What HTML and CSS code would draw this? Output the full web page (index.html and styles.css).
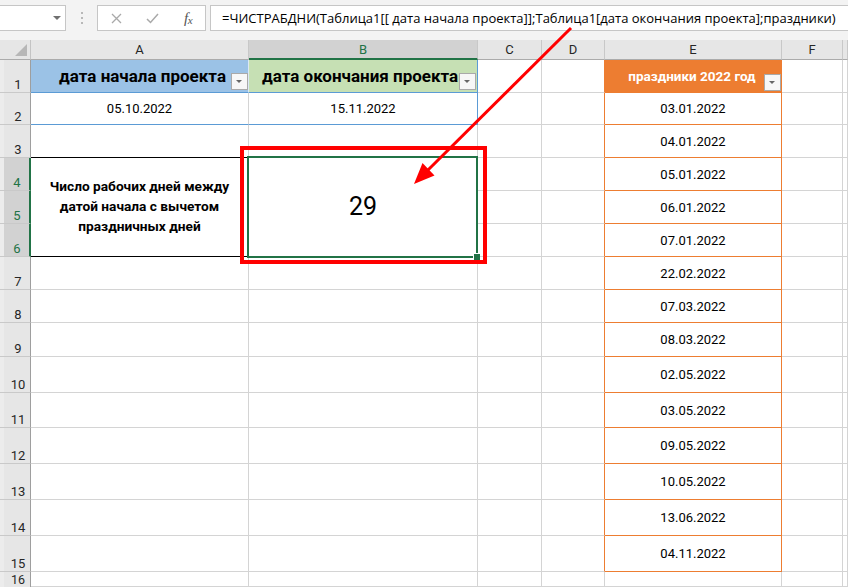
FILE: index.html
```html
<!DOCTYPE html>
<html lang="ru">
<head>
<meta charset="utf-8">
<title>Excel</title>
<link rel="stylesheet" href="styles.css">
</head>
<body>
<div class="app">
  <div class="fbar">
    <div class="namebox"><span class="nb-arrow"></span></div>
    <div class="grip">
      <svg width="3" height="12" viewBox="0 0 3 12"><rect x="0" y="0" width="2" height="2" fill="#b8b8b8"/><rect x="0" y="5" width="2" height="2" fill="#b8b8b8"/><rect x="0" y="10" width="2" height="2" fill="#b8b8b8"/></svg>
    </div>
    <div class="fbtns">
      <span class="slot s1"><svg width="11" height="11" viewBox="0 0 11 11"><path d="M1 1 L10 10 M10 1 L1 10" stroke="#a9a9a9" stroke-width="1.3" fill="none"/></svg></span>
      <span class="slot s2"><svg width="13" height="11" viewBox="0 0 13 11"><path d="M1 6 L4.5 9.5 L12 1" stroke="#a9a9a9" stroke-width="1.5" fill="none"/></svg></span>
      <span class="slot s3"><span class="fx">f<span class="fxx">x</span></span></span>
    </div>
    <div class="finput">=ЧИСТРАБДНИ(Таблица1[[ дата начала проекта]];Таблица1[дата окончания проекта];праздники)</div>
  </div>

  <div class="sheet">
    <!-- header row -->
    <div class="corner"><svg width="31" height="20" viewBox="0 0 31 20"><polygon points="27,4 27,16 15,16" fill="#b7b7b7"/></svg></div>
    <div class="ch">A</div>
    <div class="ch ch-sel">B</div>
    <div class="ch">C</div>
    <div class="ch">D</div>
    <div class="ch">E</div>
    <div class="ch">F</div>
    <div class="ch"></div>

    <!-- row 1 -->
    <div class="rh">1</div>
    <div class="c th-a">дата начала проекта<span class="dd"></span></div>
    <div class="c th-b"><span class="clip">дата окончания проекта</span><span class="dd dd-b"></span></div>
    <div class="c"></div>
    <div class="c d-edge"></div>
    <div class="c th-e">праздники 2022 год<span class="dd dd-e"></span></div>
    <div class="c"></div>
    <div class="c"></div>

    <!-- row 2 -->
    <div class="rh">2</div>
    <div class="c td-a">05.10.2022</div>
    <div class="c td-b">15.11.2022</div>
    <div class="c"></div>
    <div class="c d-edge"></div>
    <div class="c e-cell">03.01.2022</div>
    <div class="c"></div>
    <div class="c"></div>

    <!-- row 3 -->
    <div class="rh">3</div>
    <div class="c a3"></div>
    <div class="c"></div>
    <div class="c"></div>
    <div class="c d-edge"></div>
    <div class="c e-cell">04.01.2022</div>
    <div class="c"></div>
    <div class="c"></div>

    <!-- row 4 -->
    <div class="rh rh-sel">4</div>
    <div class="c merged label">Число рабочих дней между<br>датой начала с вычетом<br>праздничных дней</div>
    <div class="c merged result">29<span class="selbox"><span class="handle"></span></span></div>
    <div class="c"></div>
    <div class="c d-edge"></div>
    <div class="c e-cell">05.01.2022</div>
    <div class="c"></div>
    <div class="c"></div>

    <!-- row 5 -->
    <div class="rh rh-sel">5</div>
    <div class="c"></div>
    <div class="c d-edge"></div>
    <div class="c e-cell">06.01.2022</div>
    <div class="c"></div>
    <div class="c"></div>

    <!-- row 6 -->
    <div class="rh rh-sel">6</div>
    <div class="c"></div>
    <div class="c d-edge"></div>
    <div class="c e-cell">07.01.2022</div>
    <div class="c"></div>
    <div class="c"></div>

    <!-- row 7 -->
    <div class="rh">7</div>
    <div class="c"></div><div class="c"></div><div class="c"></div>
    <div class="c d-edge"></div>
    <div class="c e-cell">22.02.2022</div>
    <div class="c"></div><div class="c"></div>

    <!-- row 8 -->
    <div class="rh">8</div>
    <div class="c"></div><div class="c"></div><div class="c"></div>
    <div class="c d-edge"></div>
    <div class="c e-cell">07.03.2022</div>
    <div class="c"></div><div class="c"></div>

    <!-- row 9 -->
    <div class="rh">9</div>
    <div class="c"></div><div class="c"></div><div class="c"></div>
    <div class="c d-edge"></div>
    <div class="c e-cell">08.03.2022</div>
    <div class="c"></div><div class="c"></div>

    <!-- row 10 -->
    <div class="rh">10</div>
    <div class="c"></div><div class="c"></div><div class="c"></div>
    <div class="c d-edge"></div>
    <div class="c e-cell">02.05.2022</div>
    <div class="c"></div><div class="c"></div>

    <!-- row 11 -->
    <div class="rh">11</div>
    <div class="c"></div><div class="c"></div><div class="c"></div>
    <div class="c d-edge"></div>
    <div class="c e-cell">03.05.2022</div>
    <div class="c"></div><div class="c"></div>

    <!-- row 12 -->
    <div class="rh">12</div>
    <div class="c"></div><div class="c"></div><div class="c"></div>
    <div class="c d-edge"></div>
    <div class="c e-cell">09.05.2022</div>
    <div class="c"></div><div class="c"></div>

    <!-- row 13 -->
    <div class="rh">13</div>
    <div class="c"></div><div class="c"></div><div class="c"></div>
    <div class="c d-edge"></div>
    <div class="c e-cell">10.05.2022</div>
    <div class="c"></div><div class="c"></div>

    <!-- row 14 -->
    <div class="rh">14</div>
    <div class="c"></div><div class="c"></div><div class="c"></div>
    <div class="c d-edge"></div>
    <div class="c e-cell">13.06.2022</div>
    <div class="c"></div><div class="c"></div>

    <!-- row 15 -->
    <div class="rh">15</div>
    <div class="c"></div><div class="c"></div><div class="c"></div>
    <div class="c d-edge"></div>
    <div class="c e-cell">04.11.2022</div>
    <div class="c"></div><div class="c"></div>

    <!-- row 16 -->
    <div class="rh rh-last">16</div>
    <div class="c"></div><div class="c"></div><div class="c"></div>
    <div class="c"></div><div class="c"></div>
    <div class="c"></div><div class="c"></div>
  </div>

  <div class="redbox"></div>
  <svg class="arrow" width="848" height="587" viewBox="0 0 848 587">
    <line x1="571" y1="28" x2="427" y2="171" stroke="#ff0000" stroke-width="3"/>
    <polygon points="414,184 422.5,163 434.5,175.5" fill="#ff0000"/>
  </svg>
</div>
</body>
</html>
```

FILE: styles.css
```css
* { box-sizing: border-box; }

html, body {
  margin: 0;
  padding: 0;
}

body {
  width: 848px;
  height: 587px;
  overflow: hidden;
  background: #ffffff;
  font-family: Roboto, "Liberation Sans", sans-serif;
  color: #000;
}

.app {
  position: relative;
  width: 848px;
  height: 587px;
  overflow: hidden;
}

/* ---------- formula bar ---------- */
.fbar {
  height: 40px;
  background: #f3f3f3;
  display: flex;
  align-items: flex-start;
  padding-top: 5px;
}

.namebox {
  position: relative;
  width: 67px;
  height: 26px;
  margin-left: -1px;
  background: #fff;
  border: 1px solid #c6c6c6;
}

.nb-arrow {
  position: absolute;
  left: 53px;
  top: 10px;
  width: 0;
  height: 0;
  border-left: 4px solid transparent;
  border-right: 4px solid transparent;
  border-top: 4px solid #707070;
}

.grip {
  width: 31px;
  height: 26px;
  display: flex;
  align-items: center;
  justify-content: center;
  padding-left: 1px;
}

.fbtns {
  width: 109px;
  height: 26px;
  background: #fff;
  border: 1px solid #c6c6c6;
  display: flex;
  align-items: center;
}

.slot {
  display: flex;
  align-items: center;
  justify-content: center;
  height: 24px;
}
.s1 { width: 36px; }
.s2 { width: 37px; }
.s3 { width: 34px; }

.fx {
  font-family: "Liberation Serif", serif;
  font-style: italic;
  font-size: 15px;
  color: #555;
  line-height: 1;
  letter-spacing: -0.5px;
}
.fxx {
  font-size: 11px;
  position: relative;
  top: 1px;
}

.finput {
  flex: 1;
  margin-left: 4px;
  height: 26px;
  background: #fff;
  border: 1px solid #c6c6c6;
  border-right: none;
  padding-left: 11px;
  font-family: "Open Sans", "Noto Sans", sans-serif;
  font-size: 13px;
  line-height: 24px;
  white-space: nowrap;
  overflow: hidden;
  color: #000;
}

/* ---------- sheet grid ---------- */
.sheet {
  display: grid;
  grid-template-columns: 31px 218px 229px 64px 63px 177px 61px 5px;
  grid-template-rows: 20px 33px 32px 33px 33px 33px 33px 33px 33px 34px 36px 35px 36px 36px 36px 36px 15px;
}

.corner {
  background: #e6e6e6;
  border-right: 1px solid #c4c4c4;
  border-bottom: 1px solid #ababab;
}
.corner svg { display: block; }

.ch {
  background: #e6e6e6;
  border-right: 1px solid #c8c8c8;
  border-bottom: 1px solid #ababab;
  display: flex;
  align-items: center;
  justify-content: center;
  font-size: 13px;
  color: #262626;
}
.ch-sel {
  background: #d2d2d2;
  color: #217346;
  border-bottom: 2px solid #217346;
}

.rh {
  background: linear-gradient(to right, #ececec 4px, #e6e6e6 4px);
  border-right: 1px solid #9e9e9e;
  border-bottom: 1px solid #c9c9c9;
  display: flex;
  align-items: flex-end;
  justify-content: center;
  padding-left: 6px;
  font-size: 13px;
  line-height: 15px;
  color: #262626;
}
.rh-sel {
  background: linear-gradient(to right, #ececec 4px, #d2d2d2 4px);
  color: #217346;
  border-right: 2px solid #217346;
  padding-left: 5px;
}
.rh-last {
  align-items: flex-start;
  border-bottom: none;
  padding-top: 2px;
  font-size: 12.5px;
  line-height: 12px;
}

.c {
  position: relative;
  background: #fff;
  border-right: 1px solid #d4d4d4;
  border-bottom: 1px solid #d4d4d4;
  display: flex;
  align-items: center;
  justify-content: center;
  font-size: 13px;
  white-space: nowrap;
}

/* table 1 (A1:B2) */
.th-a {
  background: #9bc2e6;
  border-right-color: #dbe8f5;
  border-bottom-color: #5b9bd5;
  justify-content: flex-end;
  padding-right: 22px;
  font-weight: bold;
  font-size: 17px;
}
.th-b {
  background: #c6e0b4;
  border-right-color: #5b9bd5;
  border-bottom-color: #5b9bd5;
  justify-content: flex-start;
  padding-left: 13px;
  font-weight: bold;
  font-size: 17px;
  overflow: hidden;
}
.clip { display: block; }

.td-a { border-bottom-color: #5b9bd5; }
.td-b {
  border-bottom-color: #5b9bd5;
  border-right-color: #5b9bd5;
}

.dd {
  position: absolute;
  right: 0;
  top: 13px;
  width: 17px;
  height: 17px;
  background: #f7f7f7;
  border: 1px solid #a9a9a9;
}
.dd::after {
  content: "";
  position: absolute;
  left: 4px;
  top: 6px;
  width: 0;
  height: 0;
  border-left: 3.5px solid transparent;
  border-right: 3.5px solid transparent;
  border-top: 3.5px solid #666;
}
.dd-b { right: 1px; }
.dd-e { top: 14px; }

/* holidays table (column E) */
.d-edge { border-right-color: #ed7d31; }
.e-cell {
  border-right-color: #ed7d31;
  border-bottom-color: #ed7d31;
}
.th-e {
  background: #ed7d31;
  border-right-color: #ed7d31;
  border-bottom-color: #ed7d31;
  color: #fff;
  font-weight: bold;
  font-size: 13.5px;
  padding-right: 2px;
}

/* merged cells */
.a3 { border-bottom-color: #000; }

.merged { grid-row: span 3; }

.label {
  border-bottom-color: #000;
  border-right-color: #000;
  font-weight: bold;
  font-size: 13.7px;
  line-height: 20px;
  text-align: center;
  white-space: nowrap;
  padding-bottom: 2px;
}

.result {
  z-index: 2;
  font-size: 25px;
  padding-bottom: 2px;
}

.selbox {
  position: absolute;
  top: -2px;
  left: -2px;
  right: -1px;
  bottom: -2px;
  border: 2px solid #217346;
}
.handle {
  position: absolute;
  right: -4px;
  bottom: -4px;
  width: 7px;
  height: 7px;
  background: #217346;
  border-left: 1px solid #fff;
  border-top: 1px solid #fff;
}

/* annotations */
.redbox {
  position: absolute;
  z-index: 5;
  left: 240px;
  top: 146px;
  width: 247px;
  height: 118px;
  border: 4px solid #ff0000;
  pointer-events: none;
}

.arrow {
  position: absolute;
  z-index: 6;
  left: 0;
  top: 0;
  pointer-events: none;
}
```
